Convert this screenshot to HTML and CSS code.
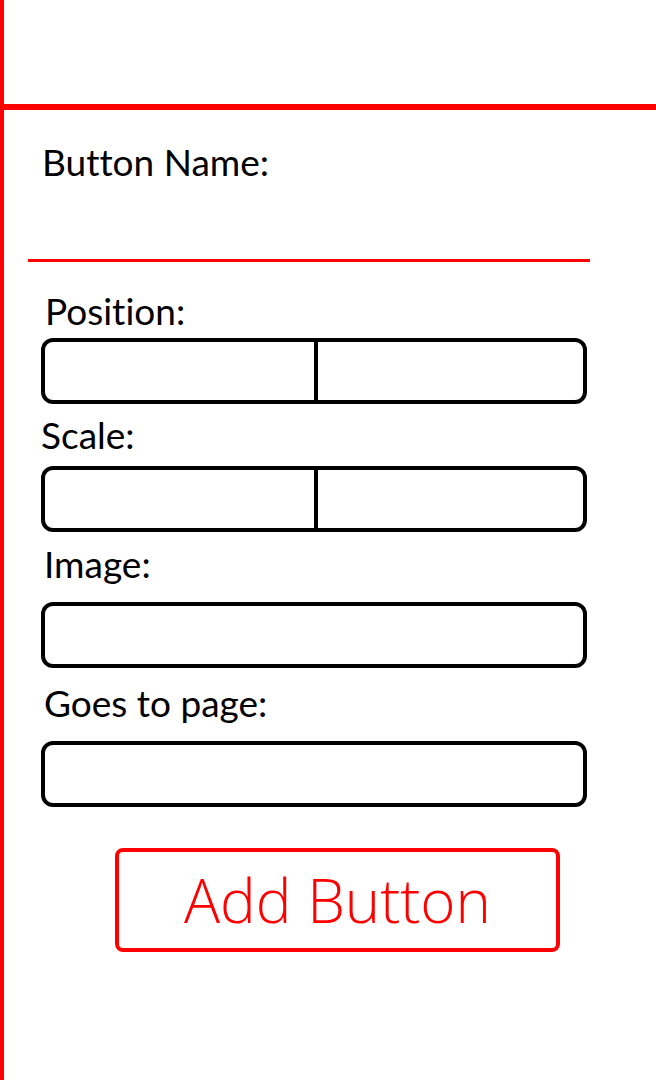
FILE: index.html
```html
<!DOCTYPE html>
<html lang="en">

<head>
    <meta charset="utf-8">
    <meta name="viewport" content="width=device-width, initial-scale=1.0">
    <title>Add Button</title>
    <link rel="stylesheet" href="styles.css">
</head>

<body>
    <div class="side">
        <header class="topbar"></header>

        <form class="editor">
            <label class="felt navn-label" for="navn">Button Name:</label>
            <input class="navn" id="navn" type="text">

            <label class="felt pos-label">Position:</label>
            <div class="boks par">
                <input type="text" aria-label="x">
                <input type="text" aria-label="y">
            </div>

            <label class="felt scale-label">Scale:</label>
            <div class="boks par">
                <input type="text" aria-label="bredde">
                <input type="text" aria-label="hoejde">
            </div>

            <label class="felt billede-label" for="billede">Image:</label>
            <div class="boks">
                <input type="text" id="billede">
            </div>

            <label class="felt side-label" for="gaartil">Goes to page:</label>
            <div class="boks">
                <input type="text" id="gaartil">
            </div>

            <button type="button" class="tilfoej">Add Button</button>
        </form>
    </div>
</body>

</html>
```

FILE: styles.css
```css
body {
    margin: 0;
    background-color: #ffffff;
}

.side {
    min-height: 1080px;
    border-left: 4px solid #ff0000;
    box-sizing: border-box;
}

.topbar {
    height: 104px;
    border-bottom: 6px solid #ff0000;
}

.editor {
    display: flex;
    flex-direction: column;
    padding-left: 37px;
    width: 546px;
}

.felt {
    font-family: 'Lato', sans-serif;
    font-size: 37px;
    line-height: 44px;
    color: #000000;
    padding-left: 1px;
    font-variant-ligatures: none;
}

.navn-label {
    margin-top: 30px;
}

.navn {
    margin-left: -13px;
    width: 562px;
    height: 75px;
    border: none;
    border-bottom: 3px solid #ff0000;
    outline: none;
    padding: 0;
}

.pos-label {
    margin-top: 27px;
    margin-bottom: 5px;
    padding-left: 4px;
}

.scale-label {
    margin-top: 9px;
    margin-bottom: 9px;
    padding-left: 0;
}

.billede-label {
    margin-top: 10px;
    margin-bottom: 16px;
    padding-left: 3px;
}

.side-label {
    margin-top: 13px;
    margin-bottom: 16px;
    padding-left: 3px;
}

.boks {
    display: flex;
    height: 66px;
    border: 4px solid #000000;
    border-radius: 12px;
    box-sizing: border-box;
    overflow: hidden;
}

.boks input {
    flex: 1;
    min-width: 0;
    border: none;
    outline: none;
    background: transparent;
    padding: 0 12px;
}

.par input:first-child {
    flex: 0 0 273px;
    box-sizing: border-box;
    border-right: 4px solid #000000;
}

.tilfoej {
    margin-top: 41px;
    margin-left: 74px;
    width: 445px;
    height: 104px;
    background-color: #ffffff;
    border: 4px solid #ff0000;
    border-radius: 8px;
    color: #ff0000;
    font-family: 'Open Sans', sans-serif;
    font-weight: 300;
    font-size: 60px;
    cursor: pointer;
}
```
